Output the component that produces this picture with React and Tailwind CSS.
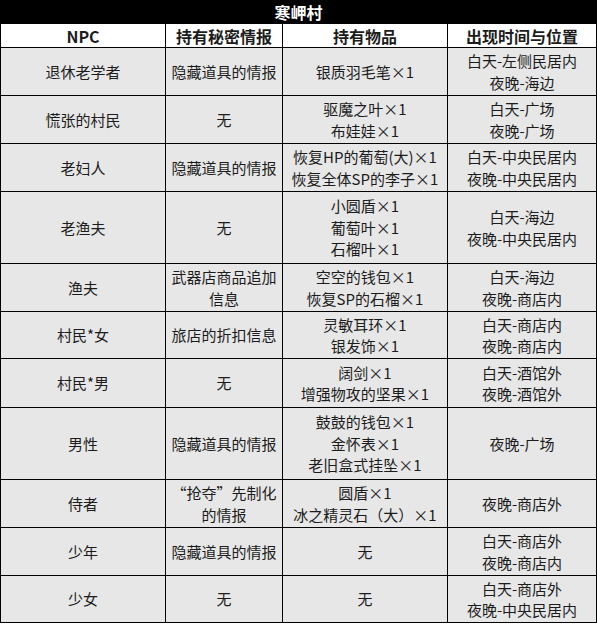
import React from "react";

const rows = [
  { h: "h-[48px]", npc: "退休老学者", info: ["隐藏道具的情报"], items: ["银质羽毛笔×1"], time: ["白天-左侧民居内", "夜晚-海边"] },
  { h: "h-[48px]", npc: "慌张的村民", info: ["无"], items: ["驱魔之叶×1", "布娃娃×1"], time: ["白天-广场", "夜晚-广场"] },
  { h: "h-[48px]", npc: "老妇人", info: ["隐藏道具的情报"], items: ["恢复HP的葡萄(大)×1", "恢复全体SP的李子×1"], time: ["白天-中央民居内", "夜晚-中央民居内"] },
  { h: "h-[72px]", npc: "老渔夫", info: ["无"], items: ["小圆盾×1", "葡萄叶×1", "石榴叶×1"], time: ["白天-海边", "夜晚-中央民居内"] },
  { h: "h-[48px]", npc: "渔夫", info: ["武器店商品追加", "信息"], items: ["空空的钱包×1", "恢复SP的石榴×1"], time: ["白天-海边", "夜晚-商店内"] },
  { h: "h-[47px]", npc: "村民*女", info: ["旅店的折扣信息"], items: ["灵敏耳环×1", "银发饰×1"], time: ["白天-商店内", "夜晚-商店内"] },
  { h: "h-[49px]", npc: "村民*男", info: ["无"], items: ["阔剑×1", "增强物攻的坚果×1"], time: ["白天-酒馆外", "夜晚-酒馆外"] },
  { h: "h-[72px]", npc: "男性", info: ["隐藏道具的情报"], items: ["鼓鼓的钱包×1", "金怀表×1", "老旧盒式挂坠×1"], time: ["夜晚-广场"] },
  { h: "h-[48px]", npc: "侍者", info: ["“抢夺”先制化", "的情报"], items: ["圆盾×1", "冰之精灵石（大）×1"], time: ["夜晚-商店外"] },
  { h: "h-[48px]", npc: "少年", info: ["隐藏道具的情报"], items: ["无"], time: ["白天-商店外", "夜晚-商店内"] },
  { h: "h-[47px]", npc: "少女", info: ["无"], items: ["无"], time: ["白天-商店外", "夜晚-中央民居内"] },
];

const cols = "grid grid-cols-[165px_117px_165px_149px]";

const Cell = ({ lines }) => (
  <div className="flex flex-col items-center justify-center text-center border-r border-b border-black px-1 whitespace-nowrap">
    {lines.map((l, i) => (
      <span key={i}>{l}</span>
    ))}
  </div>
);

const App = () => {
  return (
    <div
      className="w-[597px] h-[625px] bg-white text-[#1c1c1c]"
      style={{ fontFamily: '"Noto Sans CJK SC", "Noto Sans", sans-serif' }}
    >
      <div className="h-[24px] bg-black text-white font-bold text-[16px] leading-[24px] text-center">
        寒岬村
      </div>
      <div className="border-l border-black w-[597px]">
        <div className={`${cols} h-[24px] bg-white font-bold text-[16px] leading-[22px]`}>
          <Cell lines={["NPC"]} />
          <Cell lines={["持有秘密情报"]} />
          <Cell lines={["持有物品"]} />
          <Cell lines={["出现时间与位置"]} />
        </div>
        {rows.map((r) => (
          <div key={r.npc} className={`${cols} ${r.h} bg-[#e7e7e7] text-[15px] leading-[21.5px]`}>
            <Cell lines={[r.npc]} />
            <Cell lines={r.info} />
            <Cell lines={r.items} />
            <Cell lines={r.time} />
          </div>
        ))}
      </div>
    </div>
  );
};

export default App;
